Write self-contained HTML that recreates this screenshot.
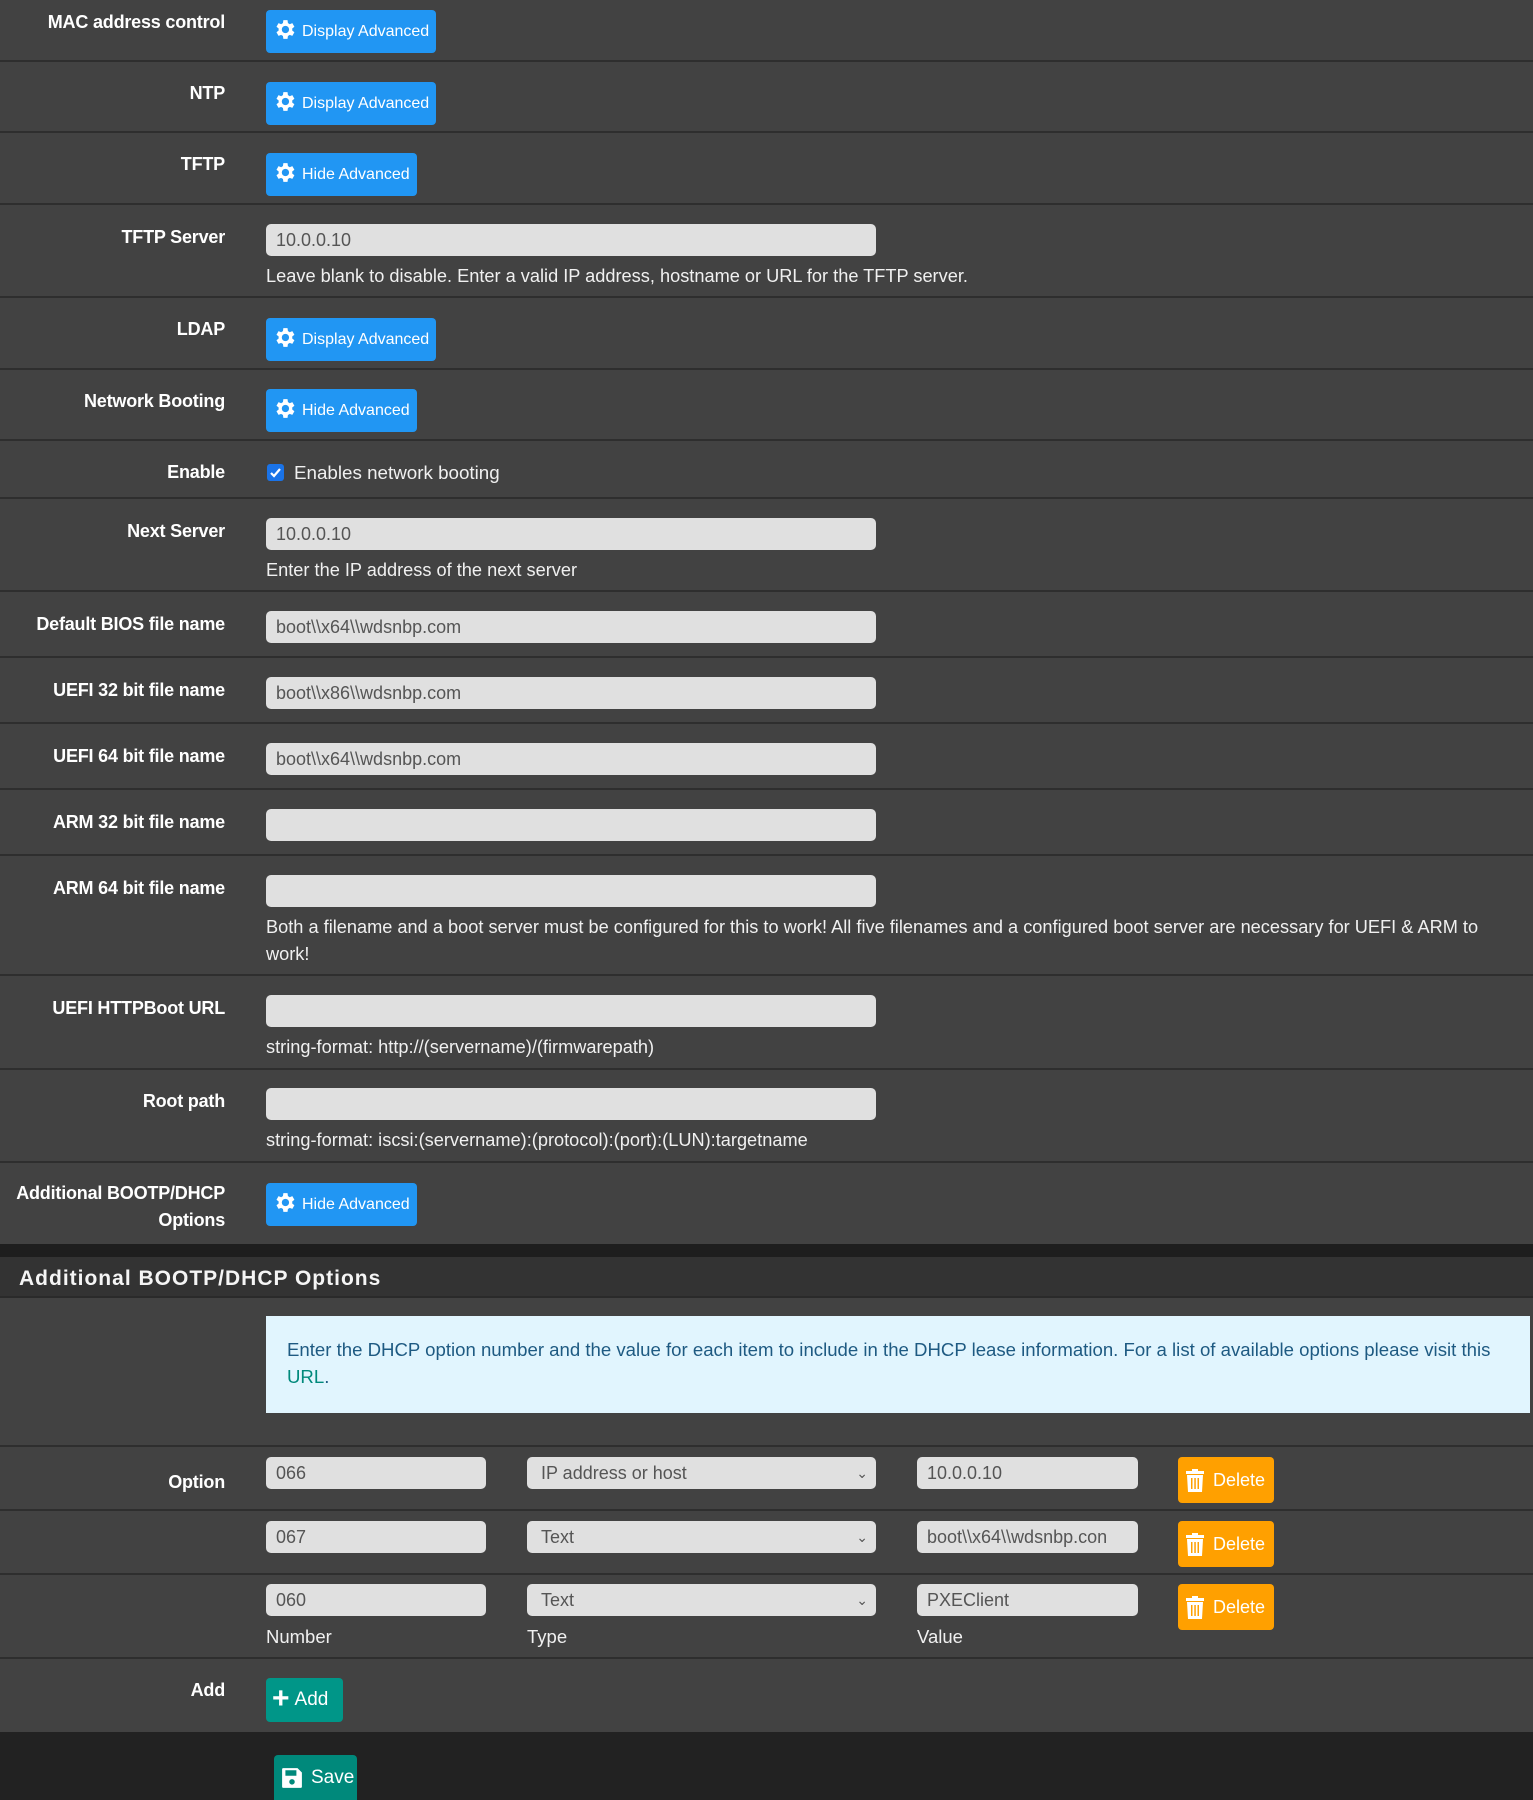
<!DOCTYPE html>
<html><head><meta charset="utf-8"><style>
*{box-sizing:border-box;margin:0;padding:0}
body{width:1533px;height:1800px;background:#424242;font-family:"Liberation Sans",Arial,sans-serif;color:#fff;position:relative;overflow:hidden}
.row{position:absolute;left:0;width:1533px;border-bottom:2px solid #2e2e2e;background:#424242}
.lbl{position:absolute;right:1308px;font-weight:bold;font-size:18px;text-align:right;line-height:27px;white-space:nowrap;letter-spacing:-0.2px}
.btn{position:absolute;left:266px;height:43px;background:#2196f3;border-radius:4px;color:#fff;font-size:16px;display:flex;align-items:center;padding:0 7px 0 6px}
.btn svg{margin-right:5px;margin-top:-5px}
.inp{position:absolute;left:266px;width:610px;height:32px;background:#e0e0e0;border-radius:5px;color:#555;font-size:18px;line-height:32px;padding-left:10px;white-space:nowrap;overflow:hidden}
.help{position:absolute;left:266px;font-size:18.2px;color:#f0f0f0;line-height:27px}
.del{position:absolute;left:1178px;width:96px;height:46px;background:#ffa000;border-radius:4px;display:flex;align-items:center;font-size:18px;color:#fff;padding-left:7px}
.del svg{margin-right:8px}
</style></head><body>

<div class="row" style="top:0;height:62px"><div class="lbl" style="top:9px">MAC address control</div>
<div class="btn" style="top:10px"><svg width="25" height="25" viewBox="0 0 24 24"><path fill="#fff" d="M19.4 13a7.5 7.5 0 000-2l2.1-1.6-2-3.5-2.5 1a7 7 0 00-1.7-1L14.9 3h-4l-.4 2.9a7 7 0 00-1.7 1l-2.5-1-2 3.5L6.4 11a7.5 7.5 0 000 2l-2.1 1.6 2 3.5 2.5-1a7 7 0 001.7 1l.4 2.9h4l.4-2.9a7 7 0 001.7-1l2.5 1 2-3.5zM12.9 15.5a3.5 3.5 0 110-7 3.5 3.5 0 010 7z"/></svg>Display Advanced</div></div>

<div class="row" style="top:62px;height:71px"><div class="lbl" style="top:18px">NTP</div>
<div class="btn" style="top:20px"><svg width="25" height="25" viewBox="0 0 24 24"><path fill="#fff" d="M19.4 13a7.5 7.5 0 000-2l2.1-1.6-2-3.5-2.5 1a7 7 0 00-1.7-1L14.9 3h-4l-.4 2.9a7 7 0 00-1.7 1l-2.5-1-2 3.5L6.4 11a7.5 7.5 0 000 2l-2.1 1.6 2 3.5 2.5-1a7 7 0 001.7 1l.4 2.9h4l.4-2.9a7 7 0 001.7-1l2.5 1 2-3.5zM12.9 15.5a3.5 3.5 0 110-7 3.5 3.5 0 010 7z"/></svg>Display Advanced</div></div>

<div class="row" style="top:133px;height:72px"><div class="lbl" style="top:18px">TFTP</div>
<div class="btn" style="top:20px"><svg width="25" height="25" viewBox="0 0 24 24"><path fill="#fff" d="M19.4 13a7.5 7.5 0 000-2l2.1-1.6-2-3.5-2.5 1a7 7 0 00-1.7-1L14.9 3h-4l-.4 2.9a7 7 0 00-1.7 1l-2.5-1-2 3.5L6.4 11a7.5 7.5 0 000 2l-2.1 1.6 2 3.5 2.5-1a7 7 0 001.7 1l.4 2.9h4l.4-2.9a7 7 0 001.7-1l2.5 1 2-3.5zM12.9 15.5a3.5 3.5 0 110-7 3.5 3.5 0 010 7z"/></svg>Hide Advanced</div></div>

<div class="row" style="top:205px;height:93px"><div class="lbl" style="top:19px">TFTP Server</div>
<div class="inp" style="top:19px">10.0.0.10</div>
<div class="help" style="top:58px">Leave blank to disable. Enter a valid IP address, hostname or URL for the TFTP server.</div></div>

<div class="row" style="top:298px;height:72px"><div class="lbl" style="top:18px">LDAP</div>
<div class="btn" style="top:20px"><svg width="25" height="25" viewBox="0 0 24 24"><path fill="#fff" d="M19.4 13a7.5 7.5 0 000-2l2.1-1.6-2-3.5-2.5 1a7 7 0 00-1.7-1L14.9 3h-4l-.4 2.9a7 7 0 00-1.7 1l-2.5-1-2 3.5L6.4 11a7.5 7.5 0 000 2l-2.1 1.6 2 3.5 2.5-1a7 7 0 001.7 1l.4 2.9h4l.4-2.9a7 7 0 001.7-1l2.5 1 2-3.5zM12.9 15.5a3.5 3.5 0 110-7 3.5 3.5 0 010 7z"/></svg>Display Advanced</div></div>

<div class="row" style="top:370px;height:71px"><div class="lbl" style="top:18px">Network Booting</div>
<div class="btn" style="top:19px"><svg width="25" height="25" viewBox="0 0 24 24"><path fill="#fff" d="M19.4 13a7.5 7.5 0 000-2l2.1-1.6-2-3.5-2.5 1a7 7 0 00-1.7-1L14.9 3h-4l-.4 2.9a7 7 0 00-1.7 1l-2.5-1-2 3.5L6.4 11a7.5 7.5 0 000 2l-2.1 1.6 2 3.5 2.5-1a7 7 0 001.7 1l.4 2.9h4l.4-2.9a7 7 0 001.7-1l2.5 1 2-3.5zM12.9 15.5a3.5 3.5 0 110-7 3.5 3.5 0 010 7z"/></svg>Hide Advanced</div></div>

<div class="row" style="top:441px;height:58px"><div class="lbl" style="top:18px">Enable</div>
<div style="position:absolute;left:267px;top:23px;width:17px;height:17px;background:#1a73e8;border-radius:3px"><svg width="17" height="17" viewBox="0 0 17 17"><path d="M4 9l3 3 6-7" stroke="#fff" stroke-width="2.2" fill="none"/></svg></div>
<div class="help" style="left:294px;top:18px;font-size:18.8px">Enables network booting</div></div>

<div class="row" style="top:499px;height:93px"><div class="lbl" style="top:19px">Next Server</div>
<div class="inp" style="top:19px">10.0.0.10</div>
<div class="help" style="top:58px">Enter the IP address of the next server</div></div>

<div class="row" style="top:592px;height:66px"><div class="lbl" style="top:19px">Default BIOS file name</div>
<div class="inp" style="top:19px">boot\\x64\\wdsnbp.com</div></div>
<div class="row" style="top:658px;height:66px"><div class="lbl" style="top:19px">UEFI 32 bit file name</div>
<div class="inp" style="top:19px">boot\\x86\\wdsnbp.com</div></div>
<div class="row" style="top:724px;height:66px"><div class="lbl" style="top:19px">UEFI 64 bit file name</div>
<div class="inp" style="top:19px">boot\\x64\\wdsnbp.com</div></div>
<div class="row" style="top:790px;height:66px"><div class="lbl" style="top:19px">ARM 32 bit file name</div>
<div class="inp" style="top:19px"></div></div>

<div class="row" style="top:856px;height:120px"><div class="lbl" style="top:19px">ARM 64 bit file name</div>
<div class="inp" style="top:19px"></div>
<div class="help" style="top:58px;width:1265px">Both a filename and a boot server must be configured for this to work! All five filenames and a configured boot server are necessary for UEFI &amp; ARM to<br>work!</div></div>

<div class="row" style="top:976px;height:94px"><div class="lbl" style="top:19px">UEFI HTTPBoot URL</div>
<div class="inp" style="top:19px"></div>
<div class="help" style="top:58px">string-format: http://(servername)/(firmwarepath)</div></div>

<div class="row" style="top:1070px;height:93px"><div class="lbl" style="top:18px">Root path</div>
<div class="inp" style="top:18px"></div>
<div class="help" style="top:57px">string-format: iscsi:(servername):(protocol):(port):(LUN):targetname</div></div>

<div class="row" style="top:1163px;height:81px;border-bottom:none"><div class="lbl" style="top:17px">Additional BOOTP/DHCP<br>Options</div>
<div class="btn" style="top:20px"><svg width="25" height="25" viewBox="0 0 24 24"><path fill="#fff" d="M19.4 13a7.5 7.5 0 000-2l2.1-1.6-2-3.5-2.5 1a7 7 0 00-1.7-1L14.9 3h-4l-.4 2.9a7 7 0 00-1.7 1l-2.5-1-2 3.5L6.4 11a7.5 7.5 0 000 2l-2.1 1.6 2 3.5 2.5-1a7 7 0 001.7 1l.4 2.9h4l.4-2.9a7 7 0 001.7-1l2.5 1 2-3.5zM12.9 15.5a3.5 3.5 0 110-7 3.5 3.5 0 010 7z"/></svg>Hide Advanced</div></div>

<div style="position:absolute;top:1244px;left:0;width:1533px;height:13px;background:#1e1e1e"></div>
<div style="position:absolute;top:1257px;left:0;width:1533px;height:41px;background:#333;border-bottom:2px solid #2a2a2a;font-size:21px;font-weight:bold;letter-spacing:1px;padding:10px 0 0 19px;color:#f5f5f5">Additional BOOTP/DHCP Options</div>

<div class="row" style="top:1298px;height:149px">
<div style="position:absolute;left:266px;top:18px;width:1264px;height:97px;background:#e1f5fe;color:#1e5a82;font-size:18.6px;line-height:27px;padding:20px 20px 0 21px">Enter the DHCP option number and the value for each item to include in the DHCP lease information. For a list of available options please visit this<br><span style="color:#00897b">URL</span>.</div></div>

<div class="row" style="top:1447px;height:64px"><div class="lbl" style="top:22px">Option</div>
<div class="inp" style="top:10px;width:220px">066</div>
<div class="inp" style="top:10px;left:527px;width:349px;padding-left:14px">IP address or host<span style="position:absolute;right:8px;top:0;font-size:14px">&#8964;</span></div>
<div class="inp" style="top:10px;left:917px;width:221px">10.0.0.10</div>
<div class="del" style="top:10px"><svg width="20" height="24" viewBox="0 0 20 24"><path fill="#fff" d="M1 3h18v3H1zM7 1h6v2H7zM2 7h16l-1 17H3zM6 10v11h1.5V10zM9.3 10v11h1.5V10zM12.5 10v11H14V10z" fill-rule="evenodd"/></svg>Delete</div></div>

<div class="row" style="top:1511px;height:64px">
<div class="inp" style="top:10px;width:220px">067</div>
<div class="inp" style="top:10px;left:527px;width:349px;padding-left:14px">Text<span style="position:absolute;right:8px;top:0;font-size:14px">&#8964;</span></div>
<div class="inp" style="top:10px;left:917px;width:221px">boot\\x64\\wdsnbp.con</div>
<div class="del" style="top:10px"><svg width="20" height="24" viewBox="0 0 20 24"><path fill="#fff" d="M1 3h18v3H1zM7 1h6v2H7zM2 7h16l-1 17H3zM6 10v11h1.5V10zM9.3 10v11h1.5V10zM12.5 10v11H14V10z" fill-rule="evenodd"/></svg>Delete</div></div>

<div class="row" style="top:1575px;height:84px">
<div class="inp" style="top:9px;width:220px">060</div>
<div class="inp" style="top:9px;left:527px;width:349px;padding-left:14px">Text<span style="position:absolute;right:8px;top:0;font-size:14px">&#8964;</span></div>
<div class="inp" style="top:9px;left:917px;width:221px">PXEClient</div>
<div class="del" style="top:9px"><svg width="20" height="24" viewBox="0 0 20 24"><path fill="#fff" d="M1 3h18v3H1zM7 1h6v2H7zM2 7h16l-1 17H3zM6 10v11h1.5V10zM9.3 10v11h1.5V10zM12.5 10v11H14V10z" fill-rule="evenodd"/></svg>Delete</div>
<div class="help" style="top:48px;font-size:18.5px">Number</div>
<div class="help" style="top:48px;left:527px;font-size:18.5px">Type</div>
<div class="help" style="top:48px;left:917px;font-size:18.5px">Value</div></div>

<div class="row" style="top:1659px;height:73px;border-bottom:none"><div class="lbl" style="top:18px">Add</div>
<div style="position:absolute;left:266px;top:19px;width:77px;height:44px;background:#009688;border-radius:4px;display:flex;align-items:center;font-size:19px;padding-left:6px"><span style="font-size:30px;font-weight:bold;margin-right:5px;margin-top:-2px">+</span>Add</div></div>

<div style="position:absolute;top:1732px;left:0;width:1533px;height:68px;background:#222"></div>
<div style="position:absolute;left:274px;top:1755px;width:83px;height:45px;background:#00897b;border-radius:4px 4px 0 0;display:flex;align-items:center;font-size:19px;padding-left:7px">
<svg width="22" height="22" viewBox="0 0 20 20" style="margin-right:8px"><path fill="#fff" d="M2 1h13l4 4v13a1 1 0 01-1 1H2a1 1 0 01-1-1V2a1 1 0 011-1zM4 3v5h10V3zM10 11a2.5 2.5 0 100 5 2.5 2.5 0 000-5z" fill-rule="evenodd"/></svg>Save</div>
</body></html>
